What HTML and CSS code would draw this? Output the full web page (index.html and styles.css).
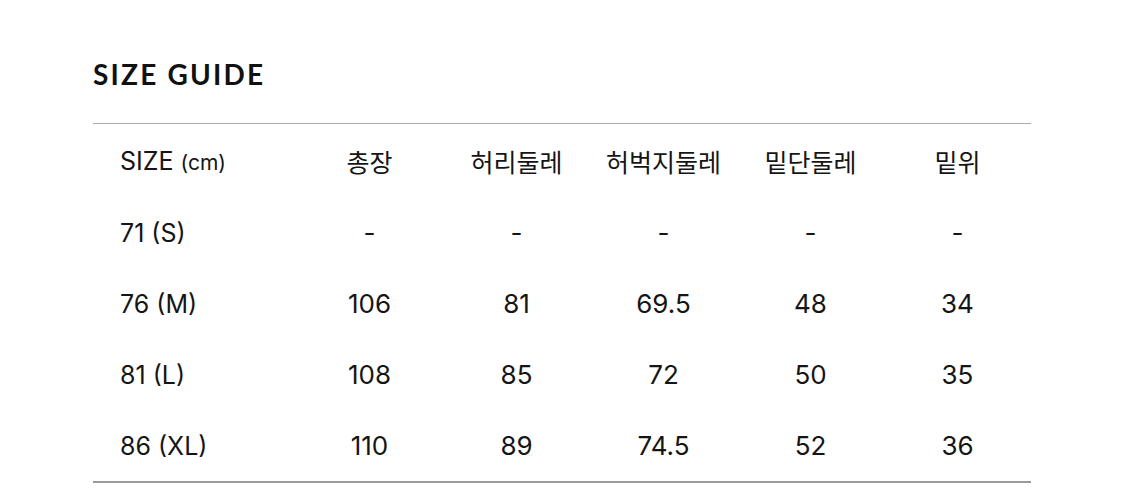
FILE: index.html
```html
<!DOCTYPE html>
<html lang="ko">
<head>
<meta charset="utf-8">
<title>Size Guide</title>
<link rel="stylesheet" href="styles.css">
</head>
<body>
<div class="guide">
  <h1 class="title">SIZE GUIDE</h1>
  <table class="size-table">
    <colgroup>
      <col class="col-size">
      <col><col><col><col><col>
    </colgroup>
    <thead>
      <tr class="head-row">
        <th class="size-cell">SIZE <span class="unit">(cm)</span></th>
        <th>총장</th>
        <th>허리둘레</th>
        <th>허벅지둘레</th>
        <th>밑단둘레</th>
        <th>밑위</th>
      </tr>
    </thead>
    <tbody>
      <tr>
        <td class="size-cell">71 (S)</td>
        <td>-</td><td>-</td><td>-</td><td>-</td><td>-</td>
      </tr>
      <tr>
        <td class="size-cell">76 (M)</td>
        <td>106</td><td>81</td><td>69.5</td><td>48</td><td>34</td>
      </tr>
      <tr>
        <td class="size-cell">81 (L)</td>
        <td>108</td><td>85</td><td>72</td><td>50</td><td>35</td>
      </tr>
      <tr>
        <td class="size-cell">86 (XL)</td>
        <td>110</td><td>89</td><td>74.5</td><td>52</td><td>36</td>
      </tr>
    </tbody>
  </table>
</div>
</body>
</html>
```
FILE: styles.css
```css
html, body {
  margin: 0;
  padding: 0;
  background: #ffffff;
}

body {
  font-family: "Inter", "Noto Sans CJK KR", sans-serif;
  color: #151515;
}

.guide {
  padding: 60px 0 0 93px;
  width: 938px;
}

.title {
  margin: 0 0 35px 0;
  font-family: "Lato", "Noto Sans CJK KR", sans-serif;
  font-weight: 700;
  font-size: 28px;
  line-height: 28px;
  letter-spacing: 2.2px;
  color: #111;
}

.size-table {
  width: 938px;
  border-collapse: collapse;
  table-layout: fixed;
  border-top: 1px solid #aaaaaa;
  border-bottom: 2px solid #9a9a9a;
}

.col-size {
  width: 203px;
}

.size-table th,
.size-table td {
  padding: 0;
  text-align: center;
  font-weight: 400;
  font-size: 26px;
  height: 71px;
  vertical-align: middle;
}

.size-table th {
  font-family: "Noto Sans CJK KR", "Inter", sans-serif;
  font-weight: 400;
  font-size: 25px;
  height: 73px;
}

.size-table .size-cell {
  text-align: left;
  padding-left: 27px;
  font-family: "Inter", "Noto Sans CJK KR", sans-serif;
  font-weight: 400;
  font-size: 25px;
}

.unit {
  font-size: 21px;
}
```
